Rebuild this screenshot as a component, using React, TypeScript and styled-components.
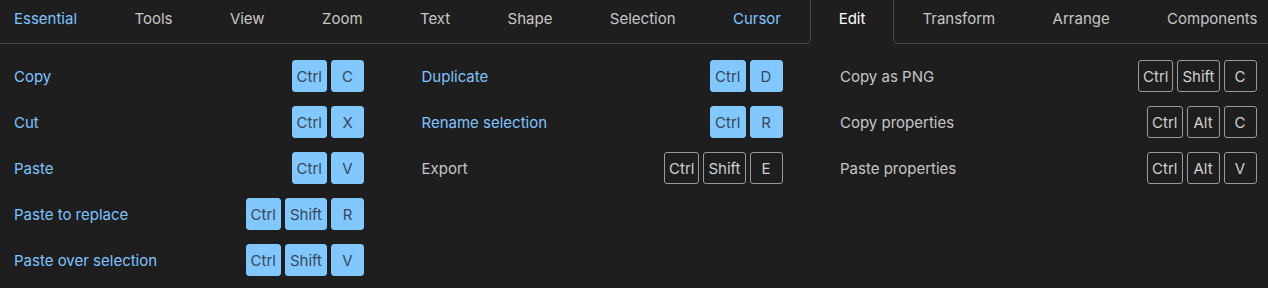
import { createGlobalStyle, styled, css } from "styled-components";

const GlobalStyle = createGlobalStyle`
  html, body {
    margin: 0;
    padding: 0;
    background: #1e1e1e;
  }
  body {
    font-family: Inter, "Noto Sans", sans-serif;
    font-size: 15px;
  }
`;

const Wrapper = styled.div`
  width: 1268px;
  height: 288px;
  overflow: hidden;
  background: #1e1e1e;
`;

const TabBar = styled.div`
  display: flex;
  height: 44px;
  white-space: nowrap;
`;

type TabPos = "before" | "active" | "after" | "normal";

const Tab = styled.div<{ $pos: TabPos; $blue?: boolean; $first?: boolean }>`
  flex: none;
  display: flex;
  align-items: center;
  padding: 0 28.7px 6px;
  box-sizing: border-box;
  height: 44px;
  color: ${(p) => (p.$blue ? "#7ec4ff" : "#c6c6c6")};
  border-bottom: 1px solid #484848;
  ${(p) => p.$first && css`padding-left: 14px;`}
  ${(p) =>
    p.$pos === "before" &&
    css`
      border-right: 1px solid #484848;
      border-bottom-right-radius: 5px;
    `}
  ${(p) =>
    p.$pos === "after" &&
    css`
      border-left: 1px solid #484848;
      border-bottom-left-radius: 5px;
      padding-left: 28px;
    `}
  ${(p) =>
    p.$pos === "active" &&
    css`
      color: #ffffff;
      border-bottom-color: transparent;
      padding: 0 28px 6px;
    `}
`;

const TabFiller = styled.div`
  flex: 1 0 0;
  border-bottom: 1px solid #484848;
`;

const Grid = styled.div`
  display: grid;
  grid-template-columns: 350px 361px 416.5px;
  column-gap: 57.5px;
  padding: 16px 0 0 14px;
`;

const Column = styled.div`
  display: flex;
  flex-direction: column;
  gap: 14px;
`;

const Row = styled.div`
  display: flex;
  align-items: center;
  justify-content: space-between;
  height: 32px;
`;

const Label = styled.span<{ $blue?: boolean }>`
  color: ${(p) => (p.$blue ? "#7ec4ff" : "#c6c6c6")};
`;

const Keys = styled.div`
  display: flex;
  gap: 4px;
`;

const Key = styled.span<{ $filled?: boolean }>`
  box-sizing: border-box;
  min-width: 33px;
  height: 32px;
  padding: 0 4px;
  display: flex;
  align-items: center;
  justify-content: center;
  border-radius: 3px;
  ${(p) =>
    p.$filled
      ? css`
          background: #80c8ff;
          border: 1px solid #80c8ff;
          color: #3a4654;
        `
      : css`
          background: transparent;
          border: 1px solid #9a9a9a;
          color: #d0d0d0;
        `}
`;

const tabs = [
  { name: "Essential", blue: true },
  { name: "Tools" },
  { name: "View" },
  { name: "Zoom" },
  { name: "Text" },
  { name: "Shape" },
  { name: "Selection" },
  { name: "Cursor", blue: true },
  { name: "Edit" },
  { name: "Transform" },
  { name: "Arrange" },
  { name: "Components" },
];
const activeIndex = 8;

type Shortcut = { label: string; keys: string[]; blue?: boolean };

const columns: Shortcut[][] = [
  [
    { label: "Copy", keys: ["Ctrl", "C"], blue: true },
    { label: "Cut", keys: ["Ctrl", "X"], blue: true },
    { label: "Paste", keys: ["Ctrl", "V"], blue: true },
    { label: "Paste to replace", keys: ["Ctrl", "Shift", "R"], blue: true },
    { label: "Paste over selection", keys: ["Ctrl", "Shift", "V"], blue: true },
  ],
  [
    { label: "Duplicate", keys: ["Ctrl", "D"], blue: true },
    { label: "Rename selection", keys: ["Ctrl", "R"], blue: true },
    { label: "Export", keys: ["Ctrl", "Shift", "E"] },
  ],
  [
    { label: "Copy as PNG", keys: ["Ctrl", "Shift", "C"] },
    { label: "Copy properties", keys: ["Ctrl", "Alt", "C"] },
    { label: "Paste properties", keys: ["Ctrl", "Alt", "V"] },
  ],
];

export default function App() {
  const posOf = (i: number): TabPos => {
    if (i === activeIndex) return "active";
    if (i === activeIndex - 1) return "before";
    if (i === activeIndex + 1) return "after";
    return "normal";
  };

  return (
    <Wrapper>
      <GlobalStyle />
      <TabBar>
        {tabs.map((t, i) => (
          <Tab key={t.name} $pos={posOf(i)} $blue={t.blue} $first={i === 0}>
            {t.name}
          </Tab>
        ))}
        <TabFiller />
      </TabBar>
      <Grid>
        {columns.map((col, ci) => (
          <Column key={ci}>
            {col.map((s) => (
              <Row key={s.label}>
                <Label $blue={s.blue}>{s.label}</Label>
                <Keys>
                  {s.keys.map((k) => (
                    <Key key={k} $filled={s.blue}>
                      {k}
                    </Key>
                  ))}
                </Keys>
              </Row>
            ))}
          </Column>
        ))}
      </Grid>
    </Wrapper>
  );
}
